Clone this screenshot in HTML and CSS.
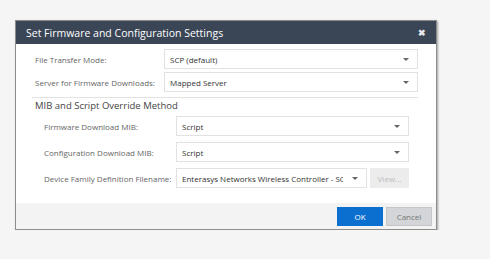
FILE: index.html
```html
<!DOCTYPE html>
<html lang="en">
<head>
  <meta charset="UTF-8">
  <title>Set Firmware and Configuration Settings</title>
  <link rel="stylesheet" href="styles.css">
</head>
<body>
  <div class="dialog">
    <div class="dialog-header">
      <span class="dialog-title">Set Firmware and Configuration Settings</span>
      <span class="close-btn">&#10006;</span>
    </div>

    <div class="dialog-body">
      <div class="row">
        <span class="label">File Transfer Mode:</span>
        <div class="select"><span>SCP (default)</span><i class="caret"></i></div>
      </div>
      <div class="row">
        <span class="label">Server for Firmware Downloads:</span>
        <div class="select"><span>Mapped Server</span><i class="caret"></i></div>
      </div>

      <div class="section">
        <div class="section-title">MIB and Script Override Method</div>
        <div class="row sub">
          <span class="label">Firmware Download MIB:</span>
          <div class="select"><span>Script</span><i class="caret"></i></div>
        </div>
        <div class="row sub">
          <span class="label">Configuration Download MIB:</span>
          <div class="select"><span>Script</span><i class="caret"></i></div>
        </div>
        <div class="row sub">
          <span class="label">Device Family Definition Filename:</span>
          <div class="select"><span class="clip">Enterasys Networks Wireless Controller - SC</span><i class="caret"></i></div>
          <button class="view-btn">View...</button>
        </div>
      </div>
    </div>

    <div class="dialog-footer">
      <button class="btn ok-btn">OK</button>
      <button class="btn cancel-btn">Cancel</button>
    </div>
  </div>
</body>
</html>
```

FILE: styles.css
```css
body {
    margin: 0;
    padding: 20px 0 0 15px;
    background: #f5f5f5;
    font-family: "Open Sans", "Liberation Sans", sans-serif;
}
.dialog {
    width: 420px;
    background: #fff;
    border: 1px solid #8c8c8c;
    box-shadow: 1px 1px 2px rgba(0, 0, 0, 0.35);
}
.dialog-header {
    display: flex;
    align-items: center;
    justify-content: space-between;
    height: 23px;
    padding: 0 10px;
    background: #3a4556;
    color: #fff;
}
.dialog-title {
    font-size: 10.5px;
}
.close-btn {
    font-size: 9px;
    color: #e6e8eb;
    font-weight: bold;
}
.dialog-body {
    padding: 5px 18px 15px 19px;
}
.row {
    display: flex;
    align-items: center;
    margin-bottom: 3px;
}
.label {
    flex-shrink: 0;
    width: 129px;
    font-size: 8px;
    color: #666;
    white-space: nowrap;
}
.select {
    flex: 1;
    display: flex;
    align-items: center;
    justify-content: space-between;
    height: 18px;
    padding: 0 8px 0 5px;
    border: 1px solid #e2e2e2;
    font-size: 8px;
    color: #333;
    min-width: 0;
}
.clip {
    overflow: hidden;
    white-space: nowrap;
    width: 161px;
}
.caret {
    width: 0;
    height: 0;
    border-left: 3.5px solid transparent;
    border-right: 3.5px solid transparent;
    border-top: 3.5px solid #666;
}
.section {
    margin-top: 5px;
    margin-left: -3px;
    padding: 1px 9px 0 0;
    border-top: 1px solid #e2e2e2;
}
.section-title {
    padding-left: 3px;
    font-size: 9.5px;
    line-height: 14px;
    color: #444;
    margin-bottom: 3px;
}
.row.sub {
    padding-left: 12px;
    margin-bottom: 6px;
}
.row.sub:last-child {
    margin-bottom: 0;
}
.row.sub .label {
    width: 132px;
}
.view-btn {
    flex-shrink: 0;
    margin-left: 3px;
    width: 39px;
    height: 20px;
    border: none;
    background: #ececec;
    color: #bcbcbc;
    font-family: inherit;
    font-size: 8px;
}
.dialog-footer {
    display: flex;
    justify-content: flex-end;
    gap: 3px;
    padding: 4px 4px 3px 0;
    background: #f3f3f3;
}
.btn {
    width: 46px;
    height: 19px;
    border: none;
    font-family: inherit;
    font-size: 8px;
}
.ok-btn {
    background: #0b6fcf;
    color: #fff;
}
.cancel-btn {
    background: #d3d5d8;
    color: #777;
    border: 1px solid #c4c6c9;
}
```
